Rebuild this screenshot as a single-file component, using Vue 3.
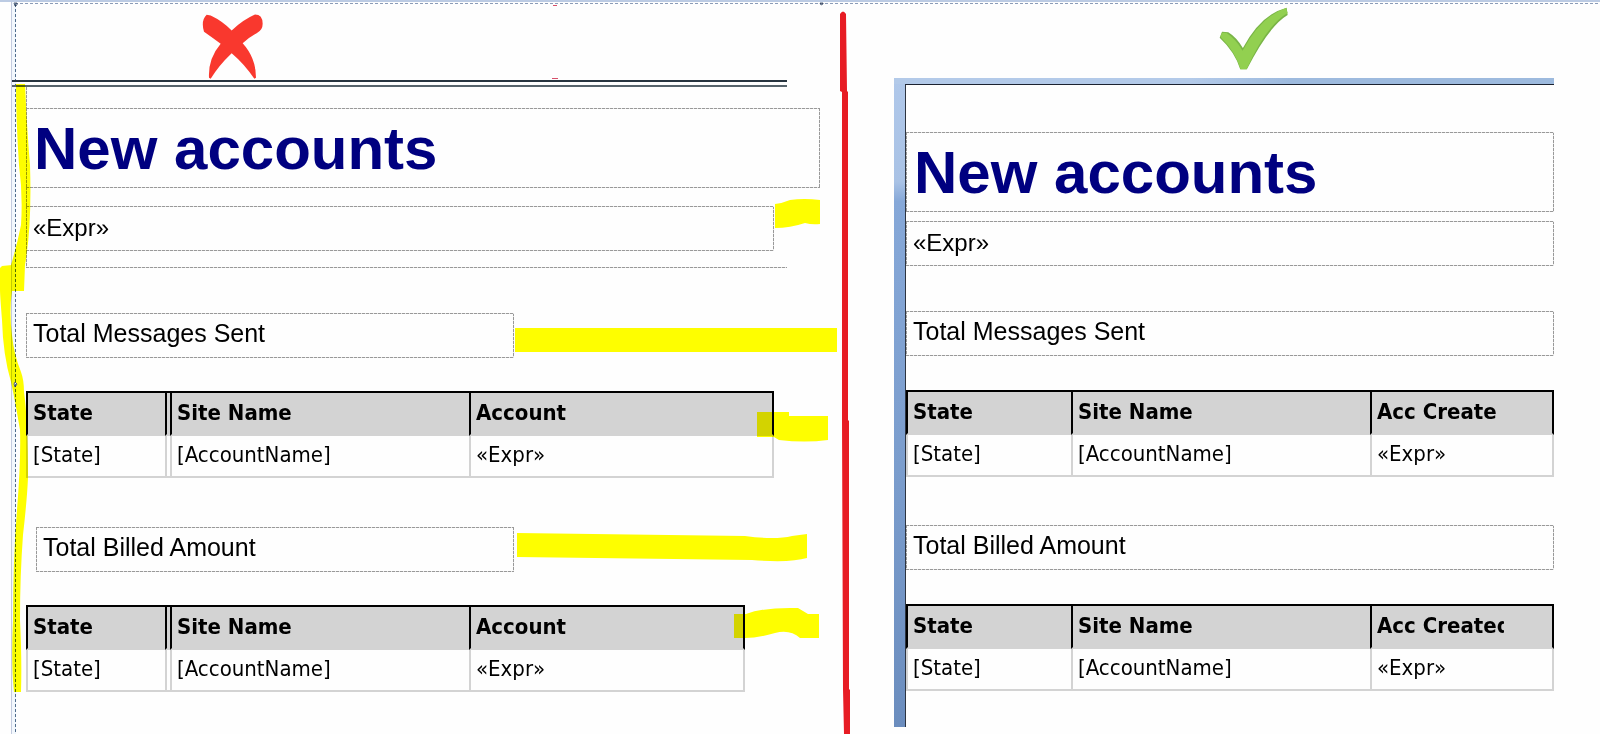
<script setup>
const leftTables = [
  { title: 'Total Messages Sent', label: 'messages', tableClass: 'wide' },
  { title: 'Total Billed Amount', label: 'billed', tableClass: 'narrow' },
]
const rightTables = [
  { title: 'Total Messages Sent', label: 'messages', column: 'Acc Create' },
  { title: 'Total Billed Amount', label: 'billed', column: 'Acc Created' },
]
</script>

<template>
  <main class="page">
    <section class="pane before" aria-label="Misaligned report">
      <header class="mark">
        <svg class="cross" viewBox="606 41 183 194" role="img" aria-label="Wrong">
          <path
            fill="#f9382e"
            d="M620 43 L632 45 Q668 62 695 90 Q728 58 765 42 Q788 42 788 70 Q788 90 770 98 Q745 112 728 128 Q768 172 768 232 L763 235 Q735 192 695 158 Q655 196 632 235 L627 232 Q624 175 662 130 Q635 110 612 94 Q602 60 620 43Z"
          />
        </svg>
      </header>
      <div class="double-rule"></div>
      <div class="group">
        <h1 class="box title">New accounts</h1>
        <p class="box expr">«Expr»</p>
      </div>
      <template v-for="t in leftTables" :key="t.label">
        <h2 class="box caption" :class="t.label">{{ t.title }}</h2>
        <table :class="t.tableClass">
          <colgroup>
            <col class="c-state" />
            <col class="c-gap" />
            <col class="c-site" />
            <col />
          </colgroup>
          <thead>
            <tr><th>State</th><th class="gap"></th><th>Site Name</th><th>Account</th></tr>
          </thead>
          <tbody>
            <tr><td>[State]</td><td class="gap"></td><td>[AccountName]</td><td>«Expr»</td></tr>
          </tbody>
        </table>
      </template>
    </section>

    <section class="pane after" aria-label="Aligned report">
      <header class="mark">
        <svg class="tick" viewBox="1074 22 208 190" role="img" aria-label="Right">
          <path fill="#79b447" d="M1083 97 L1102 98 Q1128 114 1146 146 Q1200 44 1278 24 L1281 46 Q1224 80 1158 210 L1138 210 Q1122 158 1076 115Z" />
          <path fill="#92d050" d="M1083 100 L1096 100 Q1124 118 1145 154 Q1200 50 1276 25 L1281 40 Q1218 76 1157 210 L1139 210 Q1124 158 1078 112Z" />
        </svg>
      </header>
      <div class="sheet">
        <div class="sheet-body">
          <h1 class="box title">New accounts</h1>
          <p class="box expr">«Expr»</p>
          <template v-for="t in rightTables" :key="t.label">
            <h2 class="box caption" :class="t.label">{{ t.title }}</h2>
            <table>
              <colgroup>
                <col class="c-state-wide" />
                <col class="c-site" />
                <col />
              </colgroup>
              <thead>
                <tr>
                  <th>State</th><th>Site Name</th>
                  <th><span class="clip">{{ t.column }}</span></th>
                </tr>
              </thead>
              <tbody>
                <tr><td>[State]</td><td>[AccountName]</td><td>«Expr»</td></tr>
              </tbody>
            </table>
          </template>
        </div>
      </div>
    </section>

    <svg class="ink" viewBox="0 0 1600 734" preserveAspectRatio="none" aria-hidden="true">
      <g fill="#ffff00">
        <path d="M16 84 L25 84 Q27 130 30 165 Q32 225 25 265 L24 291 L11 291 L11 265 Q17 245 21 225 Q23 195 19 165 Q16 120 16 84Z" />
        <path d="M2 266 L12 265 L12 291 Q9 312 12 335 Q14 355 21 372 Q24 380 24 392 Q28 420 28 478 Q27 500 23 535 Q20 575 20 620 Q22 660 21 692 L14 692 Q11 665 13 620 Q13 560 17 510 Q21 460 20 430 Q15 400 11 382 Q3 355 2 320 Q0 295 0 290 L0 268Z" />
        <path d="M775 204 Q783 203 790 200 Q804 198 820 200 L820 224 Q812 225 805 223 Q790 228 775 228Z" />
        <path d="M515 328 H837 V352 H515Z" />
        <path d="M757 412 H789 V416 H828 V440 Q805 443 779 440 L774 437 H757Z" />
        <path d="M517 533 L745 536 Q775 540 792 536 L807 534 V558 Q790 563 752 560 L517 557Z" />
        <path d="M734 614 H746 Q765 607 798 608 L808 614 H819 V638 H800 Q790 629 775 633 Q758 638 745 638 H734Z" />
      </g>
      <g fill="#e81c24">
        <path d="M840 14 Q843 9 846 14 L847 91 L848 92 L848 420 L849 421 L849 689 L850 690 L850 734 L844 734 L843 689 L842 420 L842 92 L840 91Z" />
        <path fill="#d8506a" d="M553 5 H557 V6 H553Z M552 78 H558 V79 H552Z" />
      </g>
      <g fill="#ffffff" stroke="#56657c">
        <path d="M14 3 h3 v2 l-2 1z M820 3 h3 v1 l-2 1z M15 382 l2 2 l-2 3 l-1 -3z" />
      </g>
    </svg>
  </main>
</template>

<style>
body {
  margin: 0;
  background: #fefefe;
}
</style>

<style scoped>
.page {
  position: relative;
  display: grid;
  grid-template-columns: 894fr 706fr;
  min-height: 100vh;
  box-sizing: border-box;
  border-top: 2px solid #bccbe3;
  background: repeating-linear-gradient(90deg, #8b9cb8 0 3px, #fefefe 3px 5px) 15px 1px / 100% 1px no-repeat;
  color: #000;
  font-family: 'Liberation Sans', Arial, sans-serif;
}

.pane {
  min-width: 0;
}

.before {
  box-sizing: border-box;
  padding-left: 26px;
  background:
    linear-gradient(#c3cbdf, #c3cbdf) 11px 0 / 1px 100% no-repeat,
    repeating-linear-gradient(180deg, #4f6c8c 0 3px, #eef4fb 3px 5px) 15px 2px / 1px 100% no-repeat,
    linear-gradient(#f3f8fd, #f3f8fd) 12px 0 / 3px 100% no-repeat;
}

.mark {
  display: flex;
  box-sizing: border-box;
}

.before .mark {
  height: 78px;
  padding: 12px 0 0 20.3%;
}

.after .mark {
  height: 76px;
  padding: 5px 0 0 46%;
}

.cross {
  width: 61px;
  height: 65px;
}

.tick {
  width: 69px;
  height: 63px;
}

.double-rule {
  width: calc(87% + 20px);
  height: 3px;
  margin-left: -14px;
  border-top: 2px solid #27343f;
  border-bottom: 2px solid #56636b;
}

.box,
.group {
  --dash: #999;
  --h: repeating-linear-gradient(90deg, var(--dash) 0 3px, #e6e6e6 3px 4px);
  --v: repeating-linear-gradient(180deg, var(--dash) 0 3px, #e6e6e6 3px 4px);
}

.box {
  box-sizing: border-box;
  margin: 0;
  background:
    var(--h) 0 0 / 100% 1px no-repeat,
    var(--h) 0 100% / 100% 1px no-repeat,
    var(--v) 0 0 / 1px 100% no-repeat,
    var(--v) 100% 0 / 1px 100% no-repeat;
  font-weight: 400;
  white-space: nowrap;
}

.group {
  padding: 21px 0 17px;
  background:
    var(--h) 0 100% / 87.7% 1px no-repeat,
    var(--v) 0 0 / 1px 100% no-repeat;
}

.title {
  height: 80px;
  padding-left: 8px;
  color: #000080;
  font-size: 60px;
  font-weight: 700;
  line-height: 82px;
}

.expr {
  height: 45px;
  padding-left: 7px;
  font-size: 24px;
  line-height: 43px;
}

.caption {
  height: 45px;
  padding-left: 7px;
  font-size: 25px;
  line-height: 40px;
}

.before .title {
  width: 91.5%;
}

.before .expr {
  width: 86.2%;
  margin-top: 18px;
}

.before .messages {
  width: 56.2%;
  margin-top: 45px;
}

.before .billed {
  width: 55.1%;
  margin: 49px 0 0 10px;
}

.before table {
  margin-top: 33px;
}

.wide {
  width: 86.2%;
}

.narrow {
  width: 82.8%;
}

.sheet {
  margin-right: 46px;
  padding: 6px 0 0 11px;
  background: linear-gradient(90deg, #b3cae9 0 45%, #9dbade 60%) 0 0 / 100% 6px no-repeat,
    linear-gradient(180deg, #b0c8ea, #a9c2e5 16%, #86a8d8 19%, #7b9dcd 60%, #6b8dbe);
}

.sheet-body {
  padding-top: 47px;
  padding-bottom: 36px;
  border-top: 1px solid #1c2230;
  border-left: 1px solid #2d3440;
  background: #fefefe;
}

.after .expr {
  margin-top: 9px;
}

.after .messages {
  margin-top: 45px;
}

.after .billed {
  margin-top: 48px;
}

.after table {
  width: 100%;
  margin-top: 34px;
}

table {
  table-layout: fixed;
  border-collapse: separate;
  border-spacing: 0;
  font-family: 'DejaVu Sans Condensed', 'DejaVu Sans', sans-serif;
  font-size: 22px;
}

.c-state {
  width: 139px;
}

.c-gap {
  width: 5px;
}

.c-site {
  width: 299px;
}

.c-state-wide {
  width: 165px;
}

th,
td {
  box-sizing: border-box;
  padding: 0 0 0 5px;
  text-align: left;
  vertical-align: top;
  white-space: nowrap;
}

th {
  height: 45px;
  border-top: 2px solid #000;
  border-left: 2px solid #000;
  border-bottom: 2px solid #d3d3d3;
  background: #d3d3d3;
  font-weight: 700;
  line-height: 40px;
}

td {
  height: 42px;
  border-left: 2px solid #d3d3d3;
  border-bottom: 2px solid #d3d3d3;
  line-height: 38px;
}

th:last-child {
  border-right: 2px solid #000;
}

td:last-child {
  border-right: 2px solid #d3d3d3;
}

.gap {
  padding: 0;
}

.clip {
  display: block;
  width: 127px;
  overflow: hidden;
}

.ink {
  position: absolute;
  top: -2px;
  left: 0;
  width: 100%;
  height: calc(100% + 2px);
  mix-blend-mode: multiply;
  pointer-events: none;
}
</style>
